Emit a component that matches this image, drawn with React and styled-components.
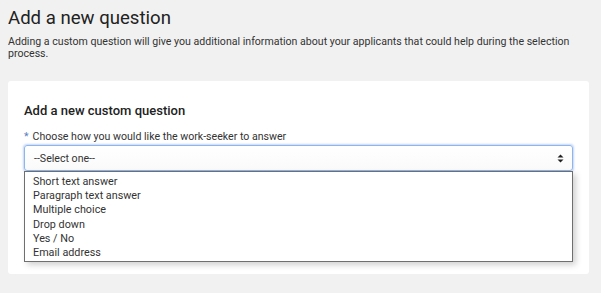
import styled, { createGlobalStyle } from "styled-components";

const GlobalStyle = createGlobalStyle`
  body {
    margin: 0;
    background: #f1f1f1;
    font-family: Roboto, "Liberation Sans", Arial, sans-serif;
    color: #333;
  }
`;

const Page = styled.div`
  padding: 6px 12px 0 8px;
`;

const Title = styled.h1`
  margin: 0;
  font-size: 18.6px;
  font-weight: 400;
  line-height: 24px;
  color: #222;
`;

const Intro = styled.p`
  margin: 6px 0 0;
  font-size: 10.6px;
  line-height: 12px;
  color: #333;
`;

const Card = styled.section`
  margin-top: 21px;
  background: #fff;
  border-radius: 3px;
  padding: 22px 16px 0;
  min-height: 171px;
`;

const CardTitle = styled.h2`
  margin: 0;
  font-size: 13px;
  font-weight: 500;
  line-height: 16px;
  color: #222;
`;

const Label = styled.label`
  display: flex;
  gap: 4px;
  margin-top: 11px;
  font-size: 10.6px;
  line-height: 13px;
  color: #333;
`;

const Required = styled.span`
  color: #5b7fbf;
`;

const SelectWrap = styled.div`
  position: relative;
  margin-top: 2px;
`;

const SelectBox = styled.div`
  display: flex;
  align-items: center;
  justify-content: space-between;
  height: 26px;
  box-sizing: border-box;
  padding: 0 8px 0 9px;
  border: 1px solid #8fb5ec;
  border-radius: 3px;
  box-shadow: 0 0 2px 1px rgba(120, 165, 235, 0.45);
  background: linear-gradient(#fff, #fafafa);
  font-size: 10.6px;
  color: #333;
`;

const Options = styled.ul`
  position: absolute;
  top: 26px;
  left: 0;
  right: 0;
  margin: 0;
  padding: 3px 0 1px;
  list-style: none;
  background: #fff;
  border: 1px solid #6f6f6f;
  box-shadow: 3px 3px 6px rgba(0, 0, 0, 0.18);
`;

const Option = styled.li`
  padding-left: 8px;
  font-size: 10.8px;
  line-height: 14.2px;
  color: #333;
`;

const Arrows = () => (
  <svg width="7" height="9" viewBox="0 0 7 9">
    <path d="M3.5 0.5 L6.5 3.5 H0.5 Z" fill="#222" />
    <path d="M3.5 8.5 L6.5 5.5 H0.5 Z" fill="#222" />
  </svg>
);

const choices = [
  "Short text answer",
  "Paragraph text answer",
  "Multiple choice",
  "Drop down",
  "Yes / No",
  "Email address",
];

export default function App() {
  return (
    <>
      <GlobalStyle />
      <Page>
        <Title>Add a new question</Title>
        <Intro>
          Adding a custom question will give you additional information about your
          applicants that could help during the selection process.
        </Intro>
        <Card>
          <CardTitle>Add a new custom question</CardTitle>
          <Label>
            <Required>*</Required>
            Choose how you would like the work-seeker to answer
          </Label>
          <SelectWrap>
            <SelectBox>
              --Select one--
              <Arrows />
            </SelectBox>
            <Options>
              {choices.map((c) => (
                <Option key={c}>{c}</Option>
              ))}
            </Options>
          </SelectWrap>
        </Card>
      </Page>
    </>
  );
}
